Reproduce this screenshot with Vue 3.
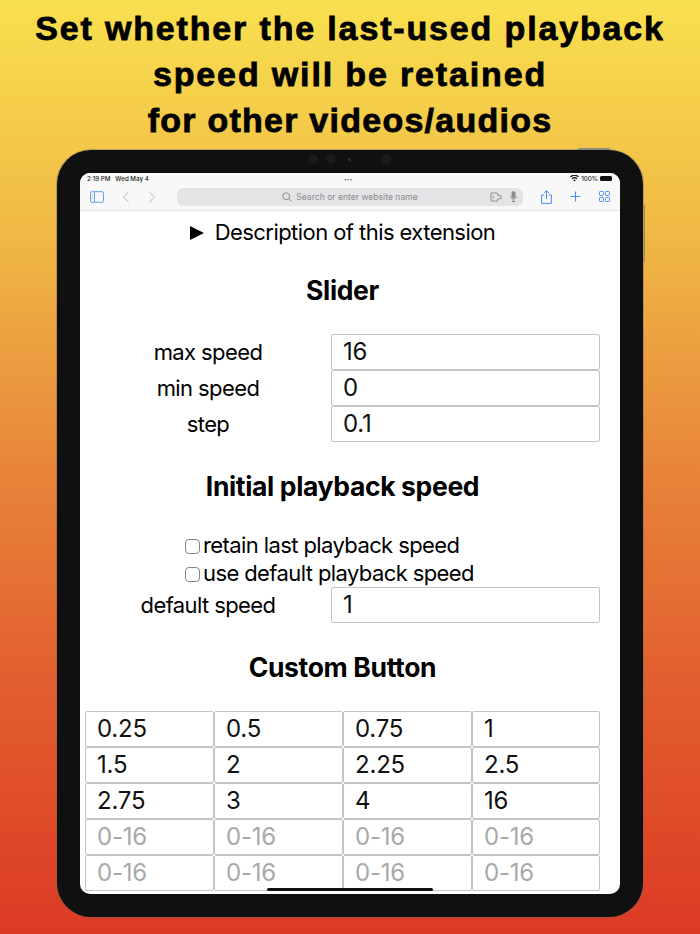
<script setup>
const sliderRows = [
  { label: 'max speed', value: '16' },
  { label: 'min speed', value: '0' },
  { label: 'step', value: '0.1' },
]
const buttons = ['0.25', '0.5', '0.75', '1', '1.5', '2', '2.25', '2.5', '2.75', '3', '4', '16', '', '', '', '', '', '', '', '']
</script>

<template>
  <div class="page">
    <h1 class="headline">Set whether the last-used playback<br>speed will be retained<br><span class="tight">for other videos/audios</span></h1>
    <div class="device">
      <span class="power"></span>
      <span class="volume"></span>
      <div class="cameras">
        <i class="lens"></i><i class="lens"></i><i class="lens blue"></i><i class="lens far"></i>
      </div>
      <div class="screen">
        <div class="status">
          <span>2:19 PM&nbsp;&nbsp; Wed May 4</span>
          <span class="dots">•••</span>
          <span class="status-right">
            <svg width="9" height="7" viewBox="0 0 20 16"><path d="M10 15 7 11.4a4.6 4.6 0 0 1 6 0zM5.4 9.6 3.4 7.3a10 10 0 0 1 13.2 0l-2 2.3a7 7 0 0 0-9.2 0zM1.8 5.4 0 3.2a15 15 0 0 1 20 0l-1.8 2.2a12.3 12.3 0 0 0-16.4 0z" fill="#111"/></svg>
            <span>100%</span>
            <span class="battery"></span>
          </span>
        </div>
        <div class="toolbar">
          <svg class="ico" width="14" height="12" viewBox="0 0 14 12" fill="none" stroke="#6a9cf3"><rect x=".5" y=".7" width="13" height="10.6" rx="1.5"/><path d="M4.5 1v10"/><path d="M2 3.5h1M2 5.5h1M2 7.5h1" stroke-width=".7"/></svg>
          <svg class="chev" width="8" height="12" viewBox="0 0 8 12" fill="none" stroke="#d0d0d3" stroke-width="1.1"><path d="M6.5 1 1.5 6l5 5"/></svg>
          <svg class="chev two" width="8" height="12" viewBox="0 0 8 12" fill="none" stroke="#d0d0d3" stroke-width="1.1"><path d="M1.5 1l5 5-5 5"/></svg>
          <div class="address">
            <span class="address-text">
              <svg width="10" height="10" viewBox="0 0 10 10" fill="none" stroke="#8b8b8f"><circle cx="4.2" cy="4.2" r="3.4"/><path d="M6.8 6.8 9.6 9.6"/></svg>
              Search or enter website name
            </span>
            <svg class="reader" width="12" height="10" viewBox="0 0 12 10" fill="none" stroke="#8b8b8f" stroke-width=".9"><path d="M1 1h6.5v2.2L11 3.6v3L7.5 7v2H1z"/><path d="M2.6 3.6 4 5 2.6 6.4"/></svg>
            <svg class="mic" width="7" height="11" viewBox="0 0 7 11" fill="none" stroke="#8b8b8f"><rect x="2" y=".5" width="3" height="6" rx="1.5" fill="#8b8b8f"/><path d="M.6 5a2.9 2.9 0 0 0 5.8 0M3.5 8v2.5M1.8 10.5h3.4"/></svg>
          </div>
          <svg class="share" width="11" height="14" viewBox="0 0 11 14" fill="none" stroke="#4c8af5"><path d="M3.2 5H.6v8.4h9.8V5H7.8M5.5 9V.8M3.2 3 5.5.7 7.8 3"/></svg>
          <svg class="plus" width="11" height="11" viewBox="0 0 11 11" stroke="#4c8af5" stroke-width="1.1"><path d="M5.5 .5v10M.5 5.5h10"/></svg>
          <svg class="tabs" width="11" height="11" viewBox="0 0 11 11" fill="none" stroke="#4c8af5" stroke-width="1"><rect x=".5" y=".5" width="4" height="4" rx=".8"/><rect x="6.5" y=".5" width="4" height="4" rx=".8"/><rect x=".5" y="6.5" width="4" height="4" rx=".8"/><rect x="6.5" y="6.5" width="4" height="4" rx=".8"/></svg>
        </div>
        <div class="content">
          <div class="summary"><span class="triangle"></span>Description of this extension</div>
          <h2 class="title">Slider</h2>
          <div class="form">
            <template v-for="row in sliderRows" :key="row.label">
              <label class="label">{{ row.label }}</label>
              <input class="field" :value="row.value">
            </template>
          </div>
          <h2 class="title second">Initial playback speed</h2>
          <div class="checks">
            <label class="check"><input type="checkbox" class="box">retain last playback speed</label>
            <label class="check"><input type="checkbox" class="box">use default playback speed</label>
          </div>
          <div class="form">
            <label class="label">default speed</label>
            <input class="field" value="1">
          </div>
          <h2 class="title third">Custom Button</h2>
          <div class="grid">
            <input v-for="(b, i) in buttons" :key="i" class="cell" :value="b" placeholder="0-16">
          </div>
        </div>
        <span class="home"></span>
      </div>
    </div>
  </div>
</template>

<style scoped>
.page {
  width: 700px;
  height: 934px;
  overflow: hidden;
  display: flex;
  flex-direction: column;
  align-items: center;
  background: linear-gradient(180deg, #f9e04f 0%, #efb544 27%, #e8853a 50%, #e2602f 72%, #dc3a24 100%);
  font-family: Inter, "Liberation Sans", sans-serif;
}
.headline {
  margin: 5px 0 0;
  height: 145px;
  font: 700 34px/46px "Liberation Sans", Arial, sans-serif;
  letter-spacing: 1.85px;
  -webkit-text-stroke: 0.8px #000;
  text-align: center;
  color: #000;
  white-space: nowrap;
}
.tight {
  letter-spacing: 1.25px;
}
.device {
  position: relative;
  width: 586px;
  height: 767px;
  box-sizing: border-box;
  padding: 23px;
  border-radius: 34px;
  background: #101010;
  box-shadow: 0 0 0 1px #6a6a6a66;
}
.power {
  position: absolute;
  top: -2px;
  right: 33px;
  width: 32px;
  height: 2px;
  background: #8d8a80;
  border-radius: 1px 1px 0 0;
}
.volume {
  position: absolute;
  top: 55px;
  right: -2px;
  width: 1px;
  height: 57px;
  background: #a98c50;
}
.cameras {
  position: absolute;
  top: 4px;
  left: 251px;
  display: flex;
  align-items: center;
  gap: 8px;
}
.lens {
  width: 10px;
  height: 10px;
  border-radius: 50%;
  background: #1a1a1a;
}
.lens.blue {
  width: 3px;
  height: 3px;
  margin: 0 4px;
  background: #27325e;
}
.lens.far {
  margin-left: 18px;
}
.screen {
  position: relative;
  height: 721px;
  overflow: hidden;
  border-radius: 10px;
  background: #fff;
}
.status {
  height: 11px;
  padding: 0 8px 0 7px;
  display: flex;
  justify-content: space-between;
  align-items: center;
  background: #f8f8f8;
  font-size: 6.2px;
  font-weight: 500;
  color: #222;
  position: relative;
}
.dots {
  position: absolute;
  left: 264px;
  font-size: 5px;
  letter-spacing: .2px;
  color: #777;
}
.status-right {
  display: flex;
  align-items: center;
  gap: 2px;
}
.battery {
  width: 12px;
  height: 5px;
  border-radius: 1.5px;
  background: #111;
}
.toolbar {
  height: 25px;
  padding: 0 0 1px 10px;
  display: flex;
  align-items: center;
  background: #f8f8f8;
  border-bottom: 1px solid #e8e8e8;
}
.chev {
  margin-left: 18px;
}
.address {
  width: 346px;
  height: 18px;
  margin-left: 21px;
  display: flex;
  align-items: center;
  border-radius: 6px;
  background: #e4e4e6;
  color: #8b8b8f;
  font-size: 8.6px;
}
.address-text {
  flex: 1;
  margin-left: 33px;
  display: flex;
  align-items: center;
  justify-content: center;
  gap: 4px;
}
.reader {
  margin-right: 8px;
}
.mic {
  margin-right: 6px;
}
.share,
.plus,
.tabs {
  margin-left: 18px;
}
.content {
  width: 525px;
  color: #000;
}
.summary {
  height: 21px;
  margin-top: 11px;
  display: flex;
  align-items: center;
  justify-content: center;
  font-size: 22px;
  line-height: 21px;
  letter-spacing: -.56px;
}
.triangle {
  width: 0;
  height: 0;
  margin-right: 11px;
  border-left: 14px solid #000;
  border-top: 7px solid transparent;
  border-bottom: 7px solid transparent;
}
.title {
  margin: 0;
  height: 34px;
  font-size: 26.5px;
  line-height: 34px;
  font-weight: 700;
  letter-spacing: -.35px;
  text-align: center;
}
.title:first-of-type {
  margin-top: 30px;
}
.form {
  display: grid;
  grid-template-columns: 1fr 269px;
  padding: 0 5px;
  align-items: center;
}
.title + .form {
  margin-top: 27px;
}
.label {
  text-align: center;
  font-size: 22px;
  letter-spacing: -.6px;
  line-height: 36px;
}
.field, .cell {
  box-sizing: border-box;
  height: 36px;
  min-width: 0;
  width: 100%;
  margin: 0;
  padding: 0 11px 2px;
  font: 400 24px Inter, "Liberation Sans", sans-serif;
  letter-spacing: -.2px;
  color: #111;
  background: #fff;
  border: 1px solid #c4c4c4;
  border-radius: 2px;
  outline: none;
}
.cell::placeholder {
  color: #a9a9a9;
  opacity: 1;
}
.title.second {
  margin-top: 27px;
}
.checks {
  margin-top: 28px;
  padding-left: 105px;
  display: flex;
  flex-direction: column;
  align-items: flex-start;
}
.check {
  height: 28px;
  display: flex;
  align-items: center;
  font-size: 22px;
  letter-spacing: -.6px;
  line-height: 28px;
}
.box {
  appearance: none;
  width: 15px;
  height: 15px;
  margin: 2px 3px 0 0;
  background: #fff;
  border: 1.5px solid #858585;
  border-radius: 4px;
}
.title.third {
  margin-top: 27px;
}
.grid {
  margin-top: 27px;
  padding: 0 5px;
  display: grid;
  grid-template-columns: 129px 129px 129px 1fr;
}
.home {
  position: absolute;
  left: 187px;
  bottom: 3px;
  width: 166px;
  height: 3px;
  border-radius: 2px;
  background: #111;
}
</style>
